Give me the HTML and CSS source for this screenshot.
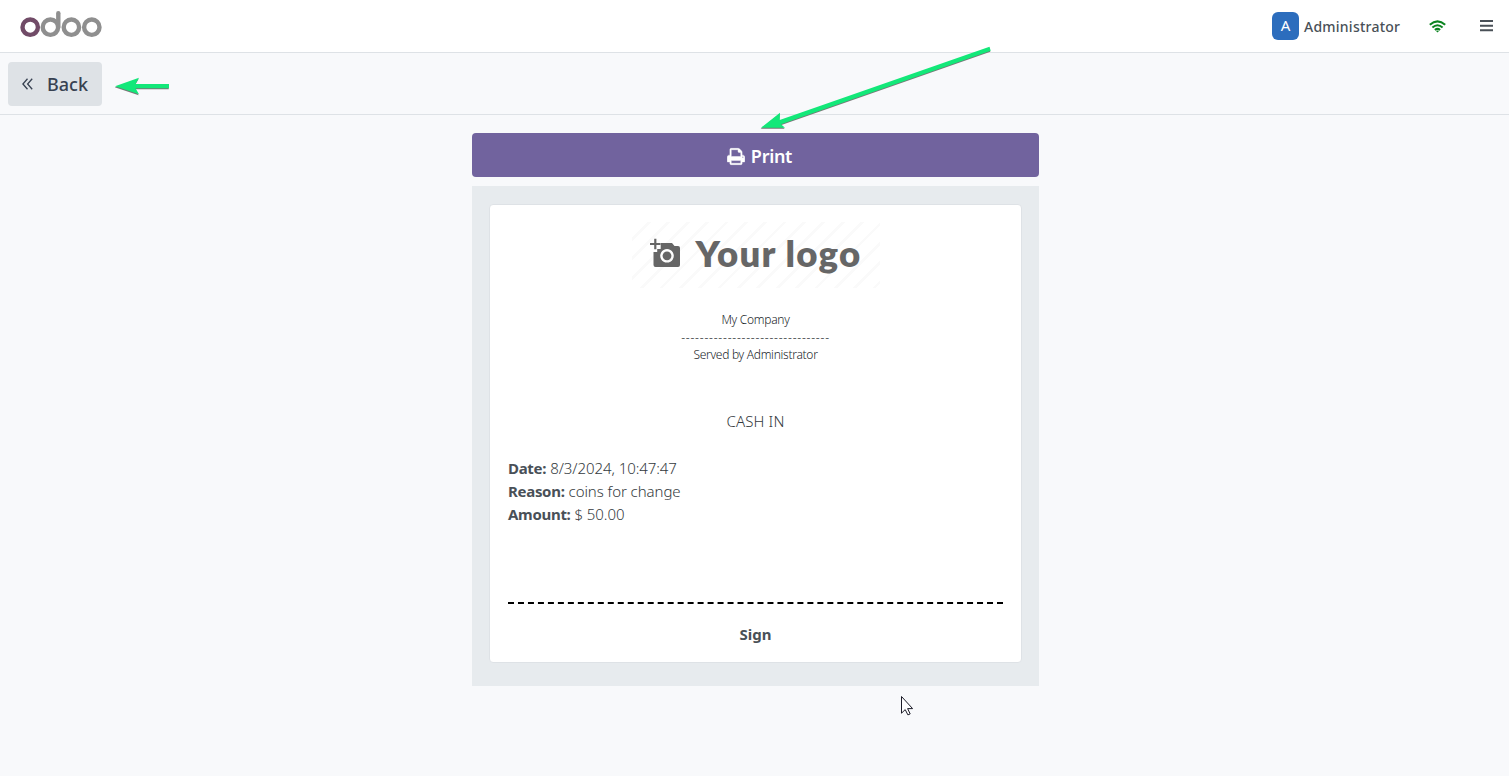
FILE: index.html
```html
<!DOCTYPE html>
<html lang="en">
<head>
<meta charset="utf-8">
<title>Cash receipt</title>
<link rel="stylesheet" href="styles.css">
</head>
<body>
<header class="topbar">
  <svg class="brand" viewBox="0 0 86 32" width="86" height="32" fill="none" stroke="#8f8f8f" stroke-width="4.4">
    <circle cx="32.4" cy="18.2" r="7.7"/><path d="M40.300 18V4.200" stroke-linecap="round"/>
    <circle cx="53.400" cy="18.200" r="7.700"/><circle cx="73.800" cy="18.200" r="7.700"/>
    <circle cx="12.200" cy="18.200" r="7.700" stroke="#714b67"/>
  </svg>
  <div class="status">
    <span class="avatar">A</span>
    <span class="user">Administrator</span>
    <svg class="wifi" width="17" height="13" viewBox="0 0 17 13" fill="none" stroke="#0c8420" stroke-width="2">
      <path d="M.8 4.800Q8.500-2 16.200 4.800M3.400 7.500Q8.500 3 13.600 7.500M5.900 10Q8.500 7.700 11.100 10"/><path d="M7 11Q8.500 9.900 10 11L8.500 12.600Z" fill="#0c8420" stroke="none"/>
    </svg>
    <svg class="menu" width="13" height="12" viewBox="0 0 13 12" fill="#495057"><path d="M0 0h13v2H0zM0 4.700h13v2H0zM0 9.200h13v2H0z"/></svg>
  </div>
</header>
<nav class="toolbar">
  <button class="back">
    <svg width="11" height="12" viewBox="0 0 11 12" fill="none" stroke="#374151" stroke-width="1.3"><path d="M5.500.8.9 6l4.600 5.200M10.200.8 5.600 6l4.600 5.200"/></svg>
    <span>Back</span>
  </button>
</nav>
<main class="content">
  <button class="print">
    <svg width="18" height="19" viewBox="0 0 1664 1792" fill="#fff" stroke="#fff" stroke-width="40"><path d="M384 1536h896v-256h-896v256zM384 896h896v-384h-160q-40 0-68-28t-28-68v-160h-640v640zM1536 960q0-26-19-45t-45-19-45 19-19 45 19 45 45 19 45-19 19-45zM1664 960v416q0 13-9.5 22.5t-22.5 9.5h-224v160q0 40-28 68t-68 28h-960q-40 0-68-28t-28-68v-160h-224q-13 0-22.5-9.5t-9.5-22.5v-416q0-79 56.5-135.5t135.5-56.5h64v-544q0-40 28-68t68-28h672q40 0 88 20t76 48l152 152q28 28 48 76t20 88v256h64q79 0 135.5 56.5t56.5 135.5z"/></svg>
    <span>Print</span>
  </button>
  <section class="preview">
    <article class="receipt">
      <div class="logo">
        <svg width="31" height="30" viewBox="0 0 31 30"><path fill="#666" fill-rule="evenodd" d="M3.500 14h3.700v-3h3.500V5H22l2.500 3H28q2 0 2 2v17q0 2-2 2H5.500q-2 0-2-2zM17 11a6.800 6.800 0 1 0 .01 0z"/><circle cx="17" cy="17.800" r="4.400" fill="#666"/><path d="M5.300.8v10.500M0 6h10.500" stroke="#666" stroke-width="2.200"/></svg>
        <span class="logo-text">Your logo</span>
      </div>
      <p class="small company">My Company</p>
      <p class="small rule">--------------------------------</p>
      <p class="small served">Served by Administrator</p>
      <h1 class="kind">CASH IN</h1>
      <div class="details">
        <div class="row"><b>Date:</b><span>8/3/2024, 10:47:47</span></div>
        <div class="row"><b>Reason:</b><span>coins for change</span></div>
        <div class="row"><b>Amount:</b><span>$ 50.00</span></div>
      </div>
      <div class="sign"><b>Sign</b></div>
    </article>
  </section>
</main>
<svg class="overlay" width="1509" height="776" viewBox="0 0 1509 776">
  <g fill="#777" transform="translate(-.3 .7)"><path d="M115 86.500 139 78l-3.500 6.300H169v4.200h-33.500L139 94.500z"/><path d="M761 128 780 113l-.3 7.200L989.500 47l1.200 4L781 124.500l4 3.500z"/></g>
  <g fill="#13e879" transform="translate(0 -.3)"><path d="M115 86.500 139 78l-3.500 6.300H169v4.200h-33.500L139 94.500z"/><path d="M761 128 780 113l-.3 7.200L989.500 47l1.200 4L781 124.500l4 3.500z"/></g>
  <path d="M901.500 696.500v16.700l3.700-3.600 2.700 5.300 2.300-1-2.600-5.300h5z" fill="#fff" stroke="#1c1c28"/>
</svg>
</body>
</html>
```
FILE: styles.css
```css
* { box-sizing: border-box; }
body { margin: 0; height: 776px; overflow: hidden; background: #f8f9fb; color: #495057; font-family: "Noto Sans", "Open Sans", sans-serif; }
button { border: 0; font-family: inherit; cursor: pointer; }
.topbar { height: 53px; background: #fff; border-bottom: 1px solid #dee2e6; display: flex; justify-content: space-between; padding: 9px 16px 0 18px; }
.status { display: flex; align-items: flex-start; }
.avatar { width: 27px; height: 28px; margin-top: 3px; border-radius: 6px; background: #2c6dbd; color: #fff; font-size: 15px; line-height: 27px; text-align: center; }
.user { width: 97px; margin-left: 5px; font-size: 14px; line-height: 28px; margin-top: 4px; font-weight: 500; letter-spacing: .24px; white-space: nowrap; }
.wifi { margin: 11px 0 0 28px; }
.menu { margin: 11px 0 0 34px; }
.toolbar { height: 62px; border-bottom: 1px solid #dee2e6; padding: 9px 8px; }
.back { width: 94px; height: 44px; background: #dee2e6; border-radius: 4px; display: flex; align-items: center; padding: 0 0 0 14px; gap: 14px; color: #374151; font-size: 18px; font-weight: 500; }
.content { width: 567px; margin: 18px 0 0 472px; }
.print { width: 567px; height: 44px; border-radius: 4px; background: #71639e; color: #fff; display: flex; align-items: center; justify-content: center; gap: 6px; padding: 2px 0 0 8px; font-size: 18px; font-weight: 600; letter-spacing: -.3px; }
.preview { margin-top: 9px; height: 500px; background: #e7ebee; padding: 18px 17px; }
.receipt { height: 459px; background: #fff; border: 1px solid #dee2e6; border-radius: 4px; padding: 17px 18px 14px; display: flex; flex-direction: column; align-items: center; }
.receipt > * { flex-shrink: 0; }
.logo { width: 248px; height: 66px; display: flex; padding: 16px 0 0 18px; background: repeating-linear-gradient(135deg, #fff 0 11px, #fafafa 11px 13.7px); }
.logo-text { font-family: Lato, sans-serif; font-weight: 800; color: #666; font-size: 36.5px; line-height: 31px; margin-left: 15px; letter-spacing: 1.25px; white-space: nowrap; }
p, h1 { margin: 0; white-space: nowrap; }
.small { font-size: 12px; line-height: 18px; height: 17.5px; font-weight: 300; letter-spacing: -.28px; color: #212529; }
.company { margin-top: 23px; }
.rule { letter-spacing: .78px; }
.kind { margin-top: 46px; font-size: 15px; line-height: 23px; font-weight: 300; letter-spacing: .15px; color: #343a40; }
.details { align-self: stretch; margin-top: 24px; }
.row { display: flex; gap: 4px; font-size: 15px; line-height: 23px; font-weight: 300; white-space: nowrap; }
.row span { color: #343a40; letter-spacing: -.06px; }
b { font-weight: 700; }
.row b { letter-spacing: -.3px; }
.sign { align-self: stretch; margin-top: 76px; border-top: 2px dashed #000; text-align: center; font-size: 15px; line-height: 23px; padding-top: 19px; }
.overlay { position: absolute; left: 0; top: 0; pointer-events: none; }
```
